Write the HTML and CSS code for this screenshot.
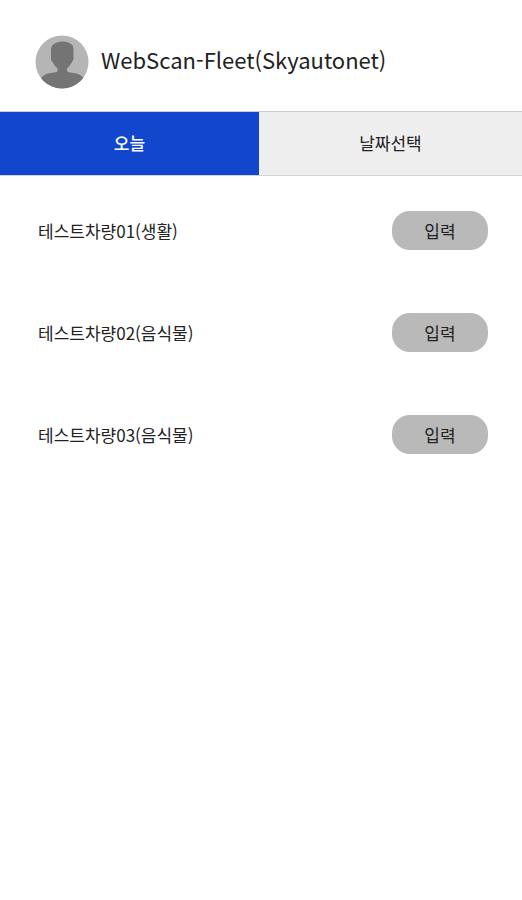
FILE: index.html
```html
<!DOCTYPE html>
<html lang="ko">
<head>
    <meta charset="UTF-8">
    <meta name="viewport" content="width=device-width, initial-scale=1.0">
    <title>WebScan-Fleet</title>
    <link rel="stylesheet" href="styles.css">
</head>
<body>
    <header class="header">
        <svg class="avatar" viewBox="0 0 54 54" aria-hidden="true">
            <defs>
                <clipPath id="avatarClip"><circle cx="27" cy="27" r="26.500"/></clipPath>
            </defs>
            <circle cx="27" cy="27" r="26.500" fill="#b5b5b5"/>
            <path clip-path="url(#avatarClip)" fill="#747474" d="M27.500 6.500c-3 0-5.500.8-8 2.200C17 10 16 12 16 15.500V24c.5 2 1.500 3 2.500 4.500 1 2 2.500 3.500 4 5V36c-1 1.500-4 1.500-8 2.200-3.500.6-6 1.800-8 4.300V54H48V42.500c-2-2.500-4.500-3.700-8-4.300-4-.7-7-.7-8-2.200v-2.500c1.500-1.500 3-3 4-5 1-1.500 2-2.500 2.500-4.500v-8.500c0-3.500-.5-5.500-3-6.800-2.500-1.400-5-2.200-8-2.200z"/>
        </svg>
        <h1 class="title">WebScan-Fleet(Skyautonet)</h1>
    </header>

    <nav class="tabs">
        <button type="button" class="tab active">오늘</button>
        <button type="button" class="tab">날짜선택</button>
    </nav>

    <ul class="car-list">
        <li class="car">
            <span class="car-name">테스트차량01(생활)</span>
            <button type="button" class="input-btn">입력</button>
        </li>
        <li class="car">
            <span class="car-name">테스트차량02(음식물)</span>
            <button type="button" class="input-btn">입력</button>
        </li>
        <li class="car">
            <span class="car-name">테스트차량03(음식물)</span>
            <button type="button" class="input-btn">입력</button>
        </li>
    </ul>
</body>
</html>
```
FILE: styles.css
```css
* {
    box-sizing: border-box;
}
body {
    margin: 0;
    background: #fff;
    color: #222;
    font-family: 'Noto Sans CJK KR', sans-serif;
    font-size: 17px;
}
.header {
    display: flex;
    align-items: flex-start;
    gap: 12px;
    padding: 35px 35px 22px;
}
.avatar {
    flex: none;
    width: 54px;
    height: 54px;
}
.title {
    margin: 0;
    font-size: 22px;
    font-weight: 400;
    line-height: 48px;
}
.tabs {
    display: flex;
    height: 65px;
    border-top: 1px solid #ccc;
    border-bottom: 1px solid #d4d4d4;
}
.tab {
    flex: 1;
    padding: 0 0 2px;
    border: none;
    background: #eee;
    color: #222;
    font: inherit;
    cursor: pointer;
}
.tab.active {
    flex: 0 0 49.6%;
    background: #1246cd;
    color: #fff;
    font-weight: 500;
}
.car-list {
    list-style: none;
    margin: 0;
    padding: 3px 34px 0 38px;
}
.car {
    display: flex;
    align-items: center;
    justify-content: space-between;
    height: 102px;
}
.input-btn {
    width: 96px;
    height: 39px;
    padding: 0;
    border: none;
    border-radius: 18px;
    background: #b9b9b9;
    color: #222;
    font: inherit;
    cursor: pointer;
}
```
